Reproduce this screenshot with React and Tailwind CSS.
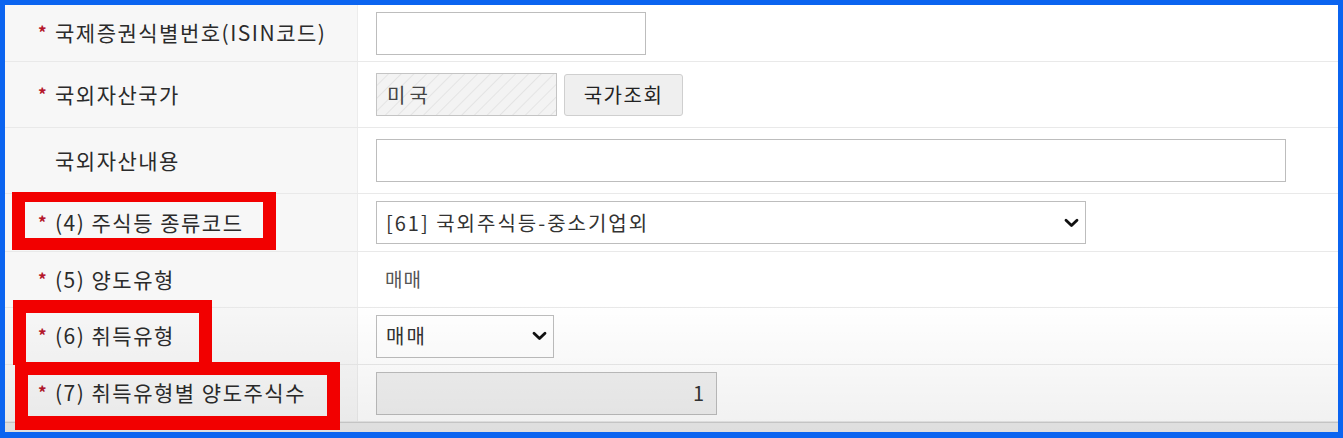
// Overseas asset entry form (해외주식 양도) with red annotation boxes over
// the highlighted labels, framed by a blue capture border.

const font = "font-['Malgun_Gothic','Noto_Sans_CJK_KR','Noto_Sans',sans-serif]";

function Star() {
  return <span className="w-[17px] pb-[3px] text-[17px] font-bold leading-none text-[#b5162b]">*</span>;
}

function Label({ star = true, children }) {
  return (
    <div className="flex w-[353px] shrink-0 items-center border-r border-[#ececec] bg-[#f7f7f7] pl-[33px] text-[21px] tracking-[1.5px] text-[#2b2b2b]">
      {star ? <Star /> : <span className="w-[17px]" />}
      <span>{children}</span>
    </div>
  );
}

function Row({ h, label, star, children }) {
  return (
    <div className={`flex border-b border-[#e9e9e9] ${h}`}>
      <Label star={star}>{label}</Label>
      <div className="flex flex-1 items-center gap-[7px] pl-[18px]">{children}</div>
    </div>
  );
}

function Chevron() {
  return (
    <svg width="15" height="10" viewBox="0 0 15 10" className="shrink-0">
      <path d="M2 2.2 L7.5 7.6 L13 2.2" fill="none" stroke="#111" strokeWidth="2.8" strokeLinecap="round" strokeLinejoin="round" />
    </svg>
  );
}

function Select({ w, children }) {
  return (
    <div className={`flex h-[43px] ${w} items-center justify-between border border-[#bdbdbd] bg-white pl-[9px] pr-[6px] text-[20px] tracking-[2px] text-[#333]`}>
      <span>{children}</span>
      <Chevron />
    </div>
  );
}

function Box({ className }) {
  return <div className={`pointer-events-none absolute border-[#f20000] ${className}`} />;
}

export default function App() {
  return (
    <div className={`${font} h-[438px] w-[1343px] border-t-[5px] border-r-[5px] border-b-[6px] border-l-[5px] border-[#0b64f0] bg-white`}>
      <div className="relative flex h-full flex-col">
        <Row h="h-[57px]" label="국제증권식별번호(ISIN코드)">
          <div className="h-[43px] w-[270px] border border-[#bdbdbd] bg-white" />
        </Row>
        <Row h="h-[66px]" label="국외자산국가">
          <div className="flex h-[43px] w-[181px] items-center border border-[#c4c4c4] bg-[repeating-linear-gradient(135deg,#f3f3f3_0px,#f3f3f3_7px,#e4e4e4_8px,#f3f3f3_9px)] pl-[10px] text-[20px] tracking-[4px] text-[#444]">
            미국
          </div>
          <div className="flex h-[42px] w-[119px] items-center justify-center rounded-[3px] border border-[#cfcfcf] bg-[#efefef] text-[20px] tracking-[1.5px] text-[#222]">
            국가조회
          </div>
        </Row>
        <Row h="h-[66px]" label="국외자산내용" star={false}>
          <div className="h-[43px] w-[910px] border border-[#bdbdbd] bg-white" />
        </Row>
        <Row h="h-[58px]" label="(4) 주식등 종류코드">
          <Select w="w-[710px]">[61] 국외주식등-중소기업외</Select>
        </Row>
        <Row h="h-[56px]" label="(5) 양도유형">
          <span className="pl-[9px] text-[19px] tracking-[1px] text-[#555]">매매</span>
        </Row>
        <Row h="h-[57px]" label="(6) 취득유형">
          <Select w="w-[178px]">매매</Select>
        </Row>
        <Row h="h-[57px]" label="(7) 취득유형별 양도주식수">
          <div className="flex h-[43px] w-[341px] items-center justify-end border border-[#bdbdbd] bg-[#f0f0f0] pr-[12px] text-[20px] text-[#333]">
            1
          </div>
        </Row>
        <div className="flex-1 border-t border-[#cfcfcf] bg-[#ececec]" />

        <div className="pointer-events-none absolute inset-x-0 bottom-0 h-[130px] bg-gradient-to-b from-transparent to-[rgba(0,0,0,0.06)]" />

        <Box className="left-[7px] top-[187px] h-[58px] w-[264px] border-x-[13px] border-t-[10px] border-b-[12px]" />
        <Box className="left-[8px] top-[295px] h-[65px] w-[199px] border-x-[13px] border-t-[13px] border-b-0" />
        <Box className="left-[10px] top-[357px] h-[68px] w-[325px] border-x-[13px] border-t-[13px] border-b-[14px]" />
      </div>
    </div>
  );
}
